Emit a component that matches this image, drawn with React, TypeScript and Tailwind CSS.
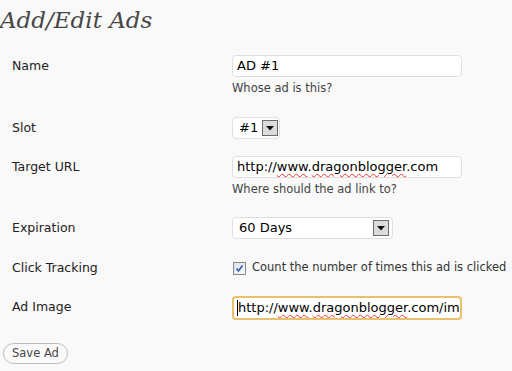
import React from "react";

const sans = { fontFamily: '"DejaVu Sans", Verdana, sans-serif' };

function Squiggle({ children }: { children: React.ReactNode }) {
  return (
    <span className="underline decoration-wavy decoration-[#e33] decoration-1 underline-offset-2">{children}</span>
  );
}

function DropBtn() {
  return (
    <div className="w-[16px] h-[16px] border border-[#6b6b6b] bg-[#dcdcdc] flex items-center justify-center shrink-0">
      <svg width="8" height="5" viewBox="0 0 8 5">
        <path d="M0 0 H8 L4 4.5 Z" fill="#111" />
      </svg>
    </div>
  );
}

function Row({ label, children, top }: { label: string; children: React.ReactNode; top: string }) {
  return (
    <div className={`flex ${top}`}>
      <div className="w-[232px] shrink-0 pl-[12px] text-[12.5px] text-[#222] leading-[22px]">{label}</div>
      <div className="flex-1 min-w-0">{children}</div>
    </div>
  );
}

export default function App() {
  return (
    <div className="w-[512px] h-[371px] bg-[#f9f9f9] overflow-hidden relative" style={sans}>
      <h2
        className="text-[23px] italic text-[#464646] pt-[6px] leading-[28px] pl-0"
        style={{ fontFamily: 'Georgia, "DejaVu Serif", serif' }}
      >
        Add/Edit Ads
      </h2>
      <div className="flex flex-col">
        <Row label="Name" top="mt-[21px]">
          <div className="w-[230px] h-[22px] bg-white border border-[#dfdfdf] rounded-[4px] pl-[4px] text-[13px] leading-[20px] text-black">
            AD #1
          </div>
          <div className="text-[11.5px] text-[#444] mt-[4px] leading-[14px]">Whose ad is this?</div>
        </Row>
        <Row label="Slot" top="mt-[22px]">
          <div className="w-[48px] h-[22px] bg-white border border-[#dfdfdf] rounded-[4px] flex items-center pl-[6px] gap-[4px] text-[13px] text-black">
            <span className="leading-[20px]">#1</span>
            <DropBtn />
          </div>
        </Row>
        <Row label="Target URL" top="mt-[17px]">
          <div className="w-[230px] h-[22px] bg-white border border-[#dfdfdf] rounded-[4px] pl-[4px] text-[13px] leading-[20px] text-black whitespace-nowrap">
            http://<Squiggle>www</Squiggle>.<Squiggle>dragonblogger</Squiggle>.com
          </div>
          <div className="text-[11.5px] text-[#444] mt-[4px] leading-[14px]">Where should the ad link to?</div>
        </Row>
        <Row label="Expiration" top="mt-[21px]">
          <div className="w-[161px] h-[22px] bg-white border border-[#dfdfdf] rounded-[4px] flex items-center justify-between pl-[6px] pr-[3px] text-[13px] text-black">
            <span className="leading-[20px]">60 Days</span>
            <DropBtn />
          </div>
        </Row>
        <Row label="Click Tracking" top="mt-[18px]">
          <div className="flex items-center h-[22px] gap-[6px] text-[11.5px] text-[#333]">
            <div className="w-[13px] h-[13px] border border-[#8a8a8a] bg-gradient-to-br from-[#dce4ef] to-[#f5f7fa] flex items-center justify-center ml-[1px] shrink-0">
              <svg width="9" height="9" viewBox="0 0 9 9">
                <path d="M1.5 4.5 L3.5 7 L7.5 1.5" stroke="#3a56a8" strokeWidth="1.6" fill="none" />
              </svg>
            </div>
            <span className="whitespace-nowrap">Count the number of times this ad is clicked</span>
          </div>
        </Row>
        <Row label="Ad Image" top="mt-[17px]">
          <div className="w-[230px] h-[24px] bg-white border-2 border-[#e9c06c] rounded-[4px] pl-[3px] text-[13px] leading-[20px] text-black whitespace-nowrap overflow-hidden flex items-center">
            <span className="w-[1px] h-[16px] bg-black shrink-0" />
            <span>
              http://<Squiggle>www</Squiggle>.<Squiggle>dragonblogger</Squiggle>.com/im
            </span>
          </div>
        </Row>
        <div className="mt-[20px] pl-[3px]">
          <div className="inline-flex items-center h-[21px] px-[8px] rounded-full border border-[#bbb] bg-[#fafafa] text-[11.5px] text-[#464646]">
            Save Ad
          </div>
        </div>
      </div>
    </div>
  );
}
